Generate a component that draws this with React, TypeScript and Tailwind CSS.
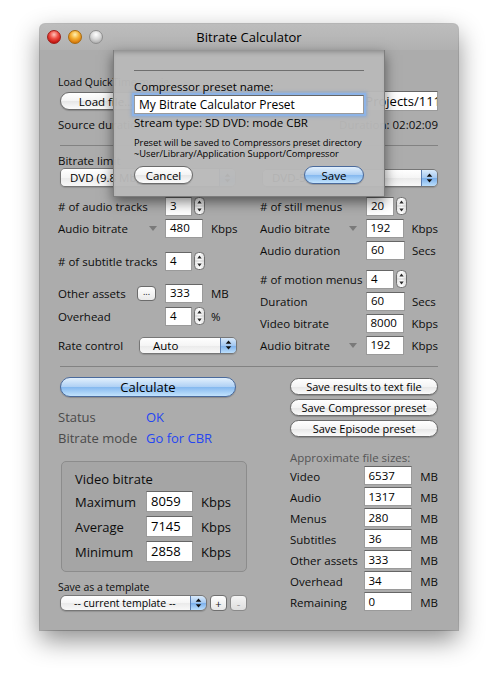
import React from "react";

type P = { children?: React.ReactNode; className?: string };

function TextField({ children, className = "" }: P) {
  return (
    <div
      className={
        "flex items-start overflow-hidden whitespace-nowrap bg-white border border-[#9a9a9a] border-t-[#666666] pl-[4px] text-black " +
        className
      }
    >
      {children}
    </div>
  );
}

function Stepper() {
  return (
    <svg width="11" height="18" viewBox="0 0 11 18" className="shrink-0">
      <defs>
        <linearGradient id="stg" x1="0" y1="0" x2="1" y2="0">
          <stop offset="0" stopColor="#e2e2e2" />
          <stop offset="0.5" stopColor="#ffffff" />
          <stop offset="1" stopColor="#dadada" />
        </linearGradient>
      </defs>
      <rect x="0.5" y="0.5" width="10" height="17" rx="4" fill="url(#stg)" stroke="#707070" />
      <line x1="1" y1="9" x2="10" y2="9" stroke="#cfcfcf" />
      <path d="M5.5 3.5 L7.7 6.5 L3.3 6.5 Z" fill="#2a2a2a" />
      <path d="M5.5 14.5 L7.7 11.5 L3.3 11.5 Z" fill="#2a2a2a" />
    </svg>
  );
}

function Tri({ className = "" }: { className?: string }) {
  return (
    <svg width="8" height="5" viewBox="0 0 8 5" className={"shrink-0 " + className}>
      <path d="M0 0 H8 L4 5 Z" fill="#7a7a7a" />
    </svg>
  );
}

function Popup({ text, className = "", textClass = "" }: { text: string; className?: string; textClass?: string }) {
  return (
    <div className={"flex overflow-hidden rounded-[5px] border border-[#767676] shadow-[0_1px_1px_rgba(0,0,0,0.15)] " + className}>
      <div
        className={
          "flex flex-1 items-center overflow-hidden whitespace-nowrap bg-[linear-gradient(to_bottom,#ffffff,#f5f5f5_50%,#eaeaea_51%,#f8f8f8)] text-black " +
          textClass
        }
      >
        {text}
      </div>
      <div className="flex w-[16px] items-center justify-center border-l border-[#5a7db0] bg-[linear-gradient(to_bottom,#d9eafb,#a3c8f1_50%,#7aafeb_51%,#bcdffc)]">
        <svg width="7" height="10" viewBox="0 0 7 10">
          <path d="M3.5 0.5 L6.3 3.8 L0.7 3.8 Z M3.5 9.5 L6.3 6.2 L0.7 6.2 Z" fill="#111" />
        </svg>
      </div>
    </div>
  );
}

function Btn({ children, className = "", blue = false }: P & { blue?: boolean }) {
  return (
    <div
      className={
        (blue
          ? "border-[#4a6a9c] bg-[linear-gradient(to_bottom,#e2f0fd,#aed0f4_50%,#84b8ef_51%,#c2e3fd)] "
          : "border-[#6b6b6b] bg-[linear-gradient(to_bottom,#ffffff,#f4f4f4_50%,#e6e6e6_51%,#fbfbfb)] ") +
        "flex items-center justify-center whitespace-nowrap rounded-full border text-black shadow-[0_1px_1px_rgba(0,0,0,0.2)] " +
        className
      }
    >
      {children}
    </div>
  );
}

function LRow({ children, className = "" }: P) {
  return <div className={"flex h-[22px] items-center " + className}>{children}</div>;
}

function SizeRow({ label, value }: { label: string; value: string }) {
  return (
    <div className="flex h-[21px] items-center">
      <div className="w-[74px] pt-[2px]">{label}</div>
      <TextField className="h-[19px] w-[49px] pt-[1px] leading-[15px]">{value}</TextField>
      <div className="ml-[8px] pt-[2px]">MB</div>
    </div>
  );
}

function BoxRow({ label, value, className = "" }: { label: string; value: string; className?: string }) {
  return (
    <div className={"flex h-[21px] items-center " + className}>
      <div className="w-[71px] pt-[2px]">{label}</div>
      <TextField className="h-[21px] w-[47px] pt-[1px] leading-[17px]">{value}</TextField>
      <div className="ml-[8px] pt-[2px]">Kbps</div>
    </div>
  );
}

export default function App() {
  return (
    <div className="h-[685px] w-[498px] bg-white pl-[40px] pt-[24px] font-['Open_Sans',sans-serif] font-medium">
      <div className="relative h-[606px] w-[418px] rounded-t-[5px] bg-[#acacac] shadow-[0_0_0_1px_rgba(0,0,0,0.22),0_10px_26px_rgba(0,0,0,0.45)]">
        {/* title bar */}
        <div className="grid h-[26px] grid-cols-[1fr_auto_1fr] items-center rounded-t-[5px] bg-[linear-gradient(to_bottom,#bdbdbd,#b1b1b1)]">
          <div className="flex gap-[7px] pl-[7px]">
            <div className="h-[14px] w-[14px] rounded-full border border-[#9c1f1a] bg-[radial-gradient(circle_at_50%_30%,#ffc4ba_0%,#ef4f45_40%,#c3140f_78%,#e8483d_100%)]" />
            <div className="h-[14px] w-[14px] rounded-full border border-[#a66a10] bg-[radial-gradient(circle_at_50%_30%,#fff1b4_0%,#f5b236_40%,#d8780a_78%,#f4a52c_100%)]" />
            <div className="h-[14px] w-[14px] rounded-full border border-[#8e8e8e] bg-[radial-gradient(circle_at_50%_30%,#ffffff_0%,#d8d8d8_45%,#b0b0b0_80%,#cdcdcd_100%)]" />
          </div>
          <div className="text-[13px] leading-[16px] text-black">Bitrate Calculator</div>
          <div />
        </div>

        {/* content */}
        <div className="pl-[18px] pr-[20px] text-[11.5px] leading-[15px] text-[#0c0c0c]">
          <div className="mt-[25px] flex h-[14px] items-center text-[10.5px] leading-[14px]">
            <span>Load QuickTime movie</span>
          </div>
          <div className="mt-[2px] flex h-[20px] items-center">
            <Btn className="ml-[2px] h-[18px] w-[92px]">Load file...</Btn>
            <div className="flex-1" />
            <TextField className="h-[20px] w-[200px] justify-end pr-0 text-[13px] leading-[18px]">
              <span className="mr-[-4px]">/Users/studio/Projects/111</span>
            </TextField>
          </div>
          <div className="mt-[4px] flex h-[18px] items-center justify-between">
            <span>Source duration</span>
            <span>Duration: 02:02:09</span>
          </div>
          <div className="ml-[2px] mt-[12px] h-[1px] bg-[#828282]" />
          <div className="mt-[6px] flex h-[16px] items-center">Bitrate limit</div>
          <div className="flex h-[19px] items-center">
            <Popup text="DVD (9.8 Mbps)" className="ml-[2px] h-[19px] w-[176px]" textClass="pl-[9px]" />
            <div className="flex-1" />
            <Popup text="DVD-5 (4.37 GiB)" className="h-[18px] w-[176px]" textClass="pl-[9px]" />
          </div>

          {/* middle grid */}
          <div className="mt-[8px] flex">
            <div className="flex w-[202px] flex-col">
              <LRow>
                <div className="w-[107px]"># of audio tracks</div>
                <TextField className="h-[19px] w-[27px] leading-[16px]">3</TextField>
                <div className="ml-[2px]"><Stepper /></div>
              </LRow>
              <LRow>
                <div className="flex w-[107px] items-center">
                  Audio bitrate
                  <Tri className="ml-auto mr-[8px]" />
                </div>
                <TextField className="h-[19px] w-[38px] leading-[16px]">480</TextField>
                <div className="ml-[8px]">Kbps</div>
              </LRow>
              <LRow className="mt-[11px]">
                <div className="w-[107px] whitespace-nowrap"># of subtitle tracks</div>
                <TextField className="h-[19px] w-[27px] leading-[16px]">4</TextField>
                <div className="ml-[2px]"><Stepper /></div>
              </LRow>
              <LRow className="mt-[10px]">
                <div className="flex w-[107px] items-center">
                  Other assets
                  <div className="ml-auto mr-[9px] flex h-[15px] w-[19px] items-center justify-center rounded-[4px] border border-[#6b6b6b] bg-[linear-gradient(to_bottom,#ffffff,#e9e9e9)] pb-[3px] text-[9px] leading-[9px]">
                    ...
                  </div>
                </div>
                <TextField className="h-[19px] w-[38px] leading-[16px]">333</TextField>
                <div className="ml-[8px]">MB</div>
              </LRow>
              <LRow className="mt-[1px]">
                <div className="w-[107px]">Overhead</div>
                <TextField className="h-[19px] w-[27px] leading-[16px]">4</TextField>
                <div className="ml-[2px]"><Stepper /></div>
                <div className="ml-[6px]">%</div>
              </LRow>
              <LRow className="mt-[7px]">
                <div className="w-[81px]">Rate control</div>
                <Popup text="Auto" className="h-[17px] w-[98px]" textClass="pl-[13px]" />
              </LRow>
            </div>

            <div className="flex w-[178px] flex-col">
              <LRow>
                <div className="w-[106px]"># of still menus</div>
                <TextField className="h-[19px] w-[28px] leading-[16px]">20</TextField>
                <div className="ml-[2px]"><Stepper /></div>
              </LRow>
              <LRow>
                <div className="flex w-[106px] items-center">
                  Audio bitrate
                  <Tri className="ml-auto mr-[9px]" />
                </div>
                <TextField className="h-[19px] w-[39px] leading-[16px]">192</TextField>
                <div className="ml-[7px]">Kbps</div>
              </LRow>
              <LRow>
                <div className="w-[106px]">Audio duration</div>
                <TextField className="h-[19px] w-[39px] leading-[16px]">60</TextField>
                <div className="ml-[7px]">Secs</div>
              </LRow>
              <LRow className="mt-[7px]">
                <div className="w-[106px] whitespace-nowrap"># of motion menus</div>
                <TextField className="h-[19px] w-[28px] leading-[16px]">4</TextField>
                <div className="ml-[2px]"><Stepper /></div>
              </LRow>
              <LRow>
                <div className="w-[106px]">Duration</div>
                <TextField className="h-[19px] w-[39px] leading-[16px]">60</TextField>
                <div className="ml-[7px]">Secs</div>
              </LRow>
              <LRow>
                <div className="w-[106px]">Video bitrate</div>
                <TextField className="h-[19px] w-[39px] leading-[16px]">8000</TextField>
                <div className="ml-[7px]">Kbps</div>
              </LRow>
              <LRow>
                <div className="flex w-[106px] items-center">
                  Audio bitrate
                  <Tri className="ml-auto mr-[9px]" />
                </div>
                <TextField className="h-[19px] w-[39px] leading-[16px]">192</TextField>
                <div className="ml-[7px]">Kbps</div>
              </LRow>
            </div>
          </div>

          <div className="ml-[2px] mt-[10px] h-[1px] bg-[#828282]" />

          {/* bottom */}
          <div className="mt-[10px] flex">
            <div className="flex w-[232px] flex-col">
              <Btn blue className="ml-[2px] h-[20px] w-[176px] text-[13px]">
                Calculate
              </Btn>
              <div className="mt-[10px] flex h-[20px] items-center text-[13px]">
                <span className="w-[88px] text-[#4a4a4a]">Status</span>
                <span className="text-[#2446f2]">OK</span>
              </div>
              <div className="mt-[1px] flex h-[20px] items-center text-[13px]">
                <span className="w-[88px] text-[#4a4a4a]">Bitrate mode</span>
                <span className="text-[#2446f2]">Go for CBR</span>
              </div>
              <div className="ml-[3px] mt-[13px] h-[111px] w-[186px] rounded-[5px] border border-[#8c8c8c] bg-[#a5a5a5] pl-[13px] pt-[9px] text-[13px] leading-[17px]">
                <div className="flex h-[16px] items-center">Video bitrate</div>
                <BoxRow className="mt-[4px]" label="Maximum" value="8059" />
                <BoxRow className="mt-[4px]" label="Average" value="7145" />
                <BoxRow className="mt-[4px]" label="Minimum" value="2858" />
              </div>
              <div className="mt-[8px] flex h-[14px] items-center text-[10.5px]">Save as a template</div>
              <div className="ml-[2px] mt-[1px] flex items-center">
                <Popup
                  text="-- current template --"
                  className="h-[16px] w-[147px] rounded-[6px]"
                  textClass="pl-[13px] text-[10.5px]"
                />
                <div className="ml-[3px] flex h-[16px] w-[17px] items-center justify-center rounded-[4px] border border-[#6f6f6f] bg-[linear-gradient(to_bottom,#ffffff,#e6e6e6)] text-[11px] leading-[11px] text-[#222]">
                  +
                </div>
                <div className="ml-[3px] flex h-[16px] w-[17px] items-center justify-center rounded-[4px] border border-[#8a8a8a] bg-[linear-gradient(to_bottom,#f4f4f4,#dedede)] text-[11px] leading-[11px] text-[#9a9a9a]">
                  -
                </div>
              </div>
            </div>

            <div className="flex w-[148px] flex-col">
              <Btn className="mt-[1px] h-[17px] w-[148px] text-[11px]">Save results to text file</Btn>
              <Btn className="mt-[4px] h-[17px] w-[148px] text-[11px]">Save Compressor preset</Btn>
              <Btn className="mt-[4px] h-[17px] w-[148px] text-[11px]">Save Episode preset</Btn>
              <div className="mt-[13px] flex h-[14px] items-center text-[#555]">Approximate file sizes:</div>
              <div className="mt-[1px] flex flex-col">
                <SizeRow label="Video" value="6537" />
                <SizeRow label="Audio" value="1317" />
                <SizeRow label="Menus" value="280" />
                <SizeRow label="Subtitles" value="36" />
                <SizeRow label="Other assets" value="333" />
                <SizeRow label="Overhead" value="34" />
                <SizeRow label="Remaining" value="0" />
              </div>
            </div>
          </div>
        </div>

        {/* sheet */}
        <div className="absolute left-[73px] top-[26px] h-[147px] w-[272px] border-x border-b border-[#7d7d7d] bg-[rgba(184,184,184,0.965)] px-[20px] pt-[20px] text-[11px] leading-[15px] text-black shadow-[inset_0_5px_5px_-3px_rgba(0,0,0,0.25),0_5px_12px_rgba(0,0,0,0.5)]">
          <div className="h-[1px] bg-[#6f6f6f]" />
          <div className="mt-[8px] flex h-[15px] items-center text-[11.5px]">Compressor preset name:</div>
          <TextField className="mt-[1px] h-[19px] border-[#7d9fcf] pt-[1px] text-[12px] leading-[15px] shadow-[0_0_0_2px_#8db3e6,0_0_3px_3px_rgba(90,150,230,0.45)]">
            My Bitrate Calculator Preset
          </TextField>
          <div className="mt-[1px] flex h-[15px] items-center text-[11.5px]">Stream type: SD DVD: mode CBR</div>
          <div className="mt-[7px] whitespace-nowrap text-[9.3px] leading-[11px]">
            <div>Preset will be saved to Compressors preset directory</div>
            <div>~User/Library/Application Support/Compressor</div>
          </div>
          <div className="mt-[7px] flex justify-between">
            <Btn className="h-[18px] w-[59px] text-[11.5px]">Cancel</Btn>
            <Btn blue className="h-[18px] w-[60px] text-[11.5px]">Save</Btn>
          </div>
        </div>
      </div>
    </div>
  );
}
